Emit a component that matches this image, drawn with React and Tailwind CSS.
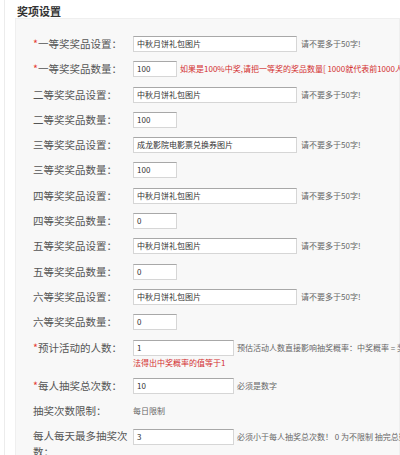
import React from "react";

const FONT = { fontFamily: '"Noto Sans CJK SC", "Noto Sans", sans-serif' };

const rows = [
  { req: true, label: "一等奖奖品设置", w: "wide", value: "中秋月饼礼包图片", hint: "请不要多于50字!" },
  { req: true, label: "一等奖奖品数量", w: "num", value: "100", red: "如果是100%中奖,请把一等奖的奖品数量[ 1000就代表前1000人参与必中 ]" },
  { label: "二等奖奖品设置", w: "wide", value: "中秋月饼礼包图片", hint: "请不要多于50字!" },
  { label: "二等奖奖品数量", w: "num", value: "100" },
  { label: "三等奖奖品设置", w: "wide", value: "成龙影院电影票兑换券图片", hint: "请不要多于50字!" },
  { label: "三等奖奖品数量", w: "num", value: "100" },
  { label: "四等奖奖品设置", w: "wide", value: "中秋月饼礼包图片", hint: "请不要多于50字!" },
  { label: "四等奖奖品数量", w: "num", value: "0" },
  { label: "五等奖奖品设置", w: "wide", value: "中秋月饼礼包图片", hint: "请不要多于50字!" },
  { label: "五等奖奖品数量", w: "num", value: "0" },
  { label: "六等奖奖品设置", w: "wide", value: "中秋月饼礼包图片", hint: "请不要多于50字!" },
  { label: "六等奖奖品数量", w: "num", value: "0" },
];

function Label({ req, children }) {
  return (
    <div className="w-[100px] shrink-0 text-[10.5px] leading-[16px] text-[#555]">
      {req && <span className="text-[#e53935]">*</span>}
      {children}
    </div>
  );
}

function Box({ w, value }) {
  const width = w === "wide" ? "w-[164px]" : w === "mid" ? "w-[101px]" : "w-[44px]";
  return (
    <div
      className={`${width} h-4 shrink-0 bg-white border border-[#d6d6d6] border-t-[#a8a8a8] pl-[3px] flex items-center text-[8px] text-[#333]`}
    >
      {value}
    </div>
  );
}

export default function App() {
  return (
    <div className="w-[400px] h-[455px] overflow-hidden bg-white" style={FONT}>
      <div className="ml-[4px] border-l border-[#ececec] h-full">
        <div className="pl-[12px] pt-[4px] h-[17px] text-[11px] leading-[15px] font-bold text-[#333]">奖项设置</div>
        <div className="ml-[10px] mt-[1px] h-full bg-[#f8f8f8] border border-[#efefef] pl-[17px] pt-[17px] flex flex-col gap-[9.3px]">
          {rows.map((r, i) => (
            <div key={i} className="flex items-center h-4 whitespace-nowrap">
              <Label req={r.req}>{r.label}：</Label>
              <Box w={r.w} value={r.value} />
              {r.hint && <span className="ml-[4px] text-[8px] text-[#666]">{r.hint}</span>}
              {r.red && <span className="ml-[3px] text-[8px] text-[#d32f2f]">{r.red}</span>}
            </div>
          ))}
          <div className="flex items-start whitespace-nowrap">
            <Label req>预计活动的人数：</Label>
            <div className="flex flex-col">
              <div className="flex items-center h-4">
                <Box w="mid" value="1" />
                <span className="ml-[3px] text-[8px] text-[#666]">预估活动人数直接影响抽奖概率：中奖概率 = 奖品总数/(预估活动人数*每人抽奖次数)</span>
              </div>
              <div className="text-[8px] leading-[13px] text-[#d32f2f]">法得出中奖概率的值等于1</div>
            </div>
          </div>
          <div className="flex items-center h-4 whitespace-nowrap">
            <Label req>每人抽奖总次数：</Label>
            <Box w="mid" value="10" />
            <span className="ml-[3px] text-[8px] text-[#666]">必须是数字</span>
          </div>
          <div className="flex items-center h-4 whitespace-nowrap">
            <Label>抽奖次数限制：</Label>
            <span className="text-[8px] text-[#666]">每日限制</span>
          </div>
          <div className="flex items-start">
            <Label>每人每天最多抽奖次数：</Label>
            <div className="flex items-center h-4 mt-[1px] whitespace-nowrap">
              <Box w="mid" value="3" />
              <span className="ml-[3px] text-[8px] text-[#666]">必须小于每人抽奖总次数！ 0 为不限制 抽完总数即止</span>
            </div>
          </div>
        </div>
      </div>
    </div>
  );
}
